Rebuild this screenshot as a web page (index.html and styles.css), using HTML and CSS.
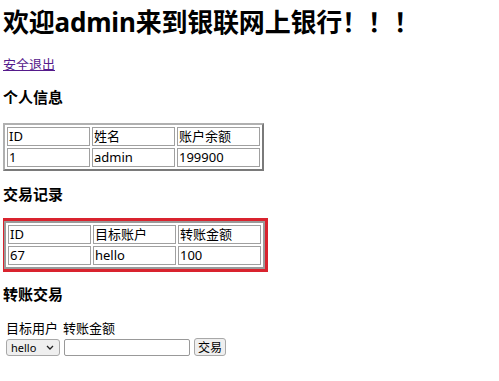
FILE: index.html
```html
<!DOCTYPE html>
<html lang="zh">
<head>
<meta charset="utf-8">
<link rel="stylesheet" href="styles.css">
</head>
<body>
<h1 class="title">欢迎admin来到银联网上银行！！！</h1>
<a class="logout" href="#">安全退出</a>
<h3 class="section">个人信息</h3>
<table class="grid">
  <tr><td>ID</td><td>姓名</td><td>账户余额</td></tr>
  <tr><td>1</td><td>admin</td><td>199900</td></tr>
</table>
<h3 class="section tight">交易记录</h3>
<div class="highlight">
<table class="grid">
  <tr><td>ID</td><td>目标账户</td><td>转账金额</td></tr>
  <tr><td>67</td><td>hello</td><td>100</td></tr>
</table>
</div>
<h3 class="section last">转账交易</h3>
<form class="transfer">
  <div class="labels"><span>目标用户</span><span>转账金额</span></div>
  <div class="controls">
    <span class="selwrap">
      <select class="sel"><option>hello</option></select>
      <svg class="chev" width="8" height="5" viewBox="0 0 8 5"><path d="M1 1l3 3 3-3" fill="none" stroke="#222" stroke-width="1.3"/></svg>
    </span>
    <input class="amount" type="text">
    <button class="btn" type="button">交易</button>
  </div>
</form>
</body>
</html>
```
FILE: styles.css
```css
html, body { background: #fff; }
body {
  margin: 0 0 0 3px;
  font-family: "Noto Sans", "Noto Sans CJK SC", sans-serif;
  font-size: 13px;
  color: #000;
}
.title {
  font-size: 26px;
  font-weight: bold;
  margin: 6px 0 17px;
  line-height: 32px;
  letter-spacing: -0.2px;
}
.logout {
  color: #551a8b;
  font-size: 13px;
  line-height: 18px;
  display: inline-block;
}
.section {
  font-size: 15px;
  font-weight: bold;
  margin: 14px 0 16px;
  line-height: 20px;
}
.tight { margin-top: 13px; margin-bottom: 14px; }
.grid {
  border-collapse: separate;
  border-spacing: 2px;
  border: 2px solid #7a7a7a;
  border-top-color: #b0b0b0;
  border-left-color: #b0b0b0;
}
.grid td {
  border: 1px solid #a0a0a0;
  width: 79px;
  height: 17px;
  padding: 0 1px;
  line-height: 17px;
  font-size: 13px;
}
.highlight {
  display: inline-block;
  border: 3px solid #d9232e;
  margin-left: -2px;
  vertical-align: top;
}
.highlight .grid { border-color: #9a9a9a; }
.last { margin-top: 12px; }
.transfer { margin: 15px 0 0 3px; }
.labels { display: flex; gap: 5px; font-size: 13px; line-height: 16px; }
.controls { display: flex; align-items: center; gap: 4px; margin-top: 2px; }
.selwrap { position: relative; display: inline-flex; }
.sel {
  -webkit-appearance: none;
  appearance: none;
  width: 54px; height: 17px;
  font-size: 11px; font-family: "Noto Sans", sans-serif;
  padding: 0 0 0 4px;
  border-radius: 3px;
  border: 1px solid #a8a8a8;
  background: #efefef;
  color: #000;
}
.chev { position: absolute; right: 6px; top: 6px; pointer-events: none; }
.amount { width: 122px; height: 13px; padding: 1px; border: 1px solid #999; border-radius: 2px; }
.btn { height: 18px; font-size: 12px; padding: 0 3px; font-family: "Noto Sans CJK SC", sans-serif; line-height: 14px; border: 1px solid #a8a8a8; border-radius: 3px; background: #efefef; }
```
